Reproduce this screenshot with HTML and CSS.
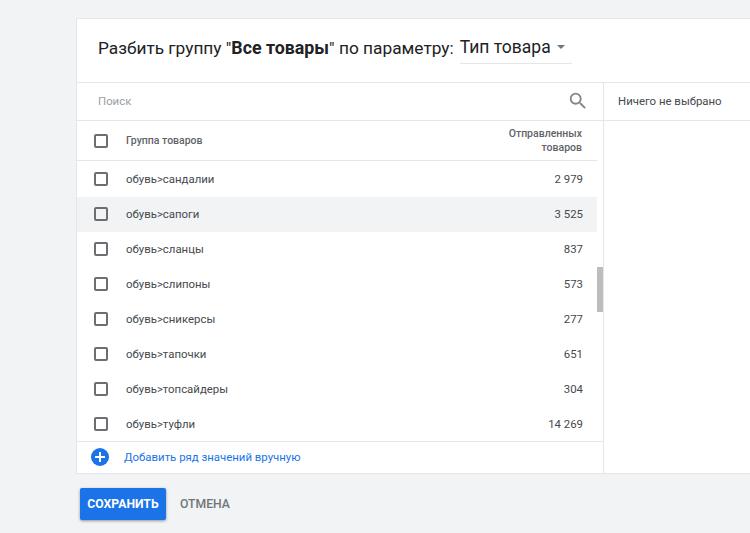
FILE: index.html
```html
<!DOCTYPE html>
<html>

<head lang="en">
    <meta charset="UTF-8">
    <title>Разбить группу</title>
    <link rel="stylesheet" href="styles.css">
</head>

<body>
    <div class="card">
        <div class="title">
            <span>Разбить группу "<b>Все товары</b>" по параметру:</span>
            <div class="select">
                <span>Тип товара</span>
                <i class="caret"></i>
            </div>
        </div>
        <div class="panes">
            <div class="left">
                <div class="search">
                    <span>Поиск</span>
                    <svg class="search-icon" width="22" height="22" viewBox="0 0 24 24">
                        <path fill="#80868b" d="M15.5 14h-.79l-.28-.27A6.47 6.47 0 0 0 16 9.5 6.5 6.5 0 1 0 9.5 16c1.61 0 3.09-.59 4.23-1.57l.27.28v.79l5 4.99L20.49 19l-4.99-5zm-6 0C7.01 14 5 11.99 5 9.5S7.01 5 9.5 5 14 7.01 14 9.5 11.99 14 9.5 14z"/>
                    </svg>
                </div>
                <div class="table-wrap">
                    <div class="table">
                        <div class="row head">
                            <i class="check"></i>
                            <span class="name">Группа товаров</span>
                            <span class="num">Отправленных<br>товаров</span>
                        </div>
                        <div class="row"><i class="check"></i><span class="name">обувь&gt;сандалии</span><span class="num">2 979</span></div>
                        <div class="row hover"><i class="check"></i><span class="name">обувь&gt;сапоги</span><span class="num">3 525</span></div>
                        <div class="row"><i class="check"></i><span class="name">обувь&gt;сланцы</span><span class="num">837</span></div>
                        <div class="row"><i class="check"></i><span class="name">обувь&gt;слипоны</span><span class="num">573</span></div>
                        <div class="row"><i class="check"></i><span class="name">обувь&gt;сникерсы</span><span class="num">277</span></div>
                        <div class="row"><i class="check"></i><span class="name">обувь&gt;тапочки</span><span class="num">651</span></div>
                        <div class="row"><i class="check"></i><span class="name">обувь&gt;топсайдеры</span><span class="num">304</span></div>
                        <div class="row"><i class="check"></i><span class="name">обувь&gt;туфли</span><span class="num">14 269</span></div>
                    </div>
                    <div class="scrollbar"><div class="thumb"></div></div>
                </div>
                <div class="add">
                    <svg width="18" height="18" viewBox="0 0 18 18">
                        <circle cx="9" cy="9" r="9" fill="#1a73e8"/>
                        <path fill="#fff" d="M8 4h2v4h4v2h-4v4H8v-4H4V8h4z"/>
                    </svg>
                    <span>Добавить ряд значений вручную</span>
                </div>
            </div>
            <div class="right">
                <div class="selected">Ничего не выбрано</div>
            </div>
        </div>
    </div>
    <div class="actions">
        <button type="button" class="save">СОХРАНИТЬ</button>
        <button type="button" class="cancel">ОТМЕНА</button>
    </div>
</body>

</html>
```

FILE: styles.css
```css
* {
    margin: 0;
    padding: 0;
    box-sizing: border-box;
}

body {
    height: 533px;
    overflow: hidden;
    padding: 18px 0 0 76px;
    background-color: #f1f3f4;
    font-family: Roboto, "Noto Sans", sans-serif;
    color: #45494d;
}

.card {
    width: 674px;
    height: 456px;
    border: 1px solid #e4e6e8;
    border-right: 0;
    background-color: #fff;
    display: flex;
    flex-direction: column;
}

.title {
    height: 64px;
    flex: none;
    padding: 0 0 6px 21px;
    display: flex;
    align-items: center;
    gap: 6px;
    font-size: 17.3px;
    color: #202124;
    border-bottom: 1px solid #e4e6e8;
}

.title b {
    font-size: 17.8px;
    font-weight: 700;
}

.select {
    height: 33px;
    width: 112px;
    display: flex;
    align-items: center;
    gap: 6px;
    font-size: 17.5px;
    border-bottom: 1px solid #e4e6e8;
}

.caret {
    width: 0;
    height: 0;
    border-left: 4.5px solid transparent;
    border-right: 4.5px solid transparent;
    border-top: 4.5px solid #757575;
}

.panes {
    flex: 1;
    display: flex;
    min-height: 0;
}

.left {
    width: 527px;
    display: flex;
    flex-direction: column;
    border-right: 1px solid #e4e6e8;
}

.search {
    height: 38px;
    flex: none;
    padding: 0 14px 1px 21px;
    display: flex;
    align-items: center;
    justify-content: space-between;
    font-size: 11.4px;
    color: #9aa0a6;
    border-bottom: 1px solid #e4e6e8;
}

.table-wrap {
    flex: 1;
    display: flex;
    min-height: 0;
    overflow: hidden;
}

.table {
    width: 520px;
}

.scrollbar {
    width: 6px;
    padding-top: 146px;
}

.thumb {
    height: 45px;
    background-color: #bdbdbd;
}

.row {
    height: 34.9px;
    padding: 0 14px 0 17px;
    display: flex;
    align-items: center;
    font-size: 11.4px;
}

.row.hover {
    background-color: #f1f3f4;
}

.row.head {
    height: 40px;
    margin-bottom: 1px;
    padding-right: 15px;
    border-bottom: 1px solid #e4e6e8;
    font-size: 10.5px;
    font-weight: 500;
    color: #5f6368;
    line-height: 14px;
}

.check {
    width: 14px;
    height: 14px;
    flex: none;
    border: 2px solid #6b6e72;
    border-radius: 2px;
}

.name {
    flex: 1;
    margin-left: 18px;
}

.num {
    text-align: right;
}

.add {
    height: 32px;
    flex: none;
    padding: 0 0 1px 14px;
    display: flex;
    align-items: center;
    gap: 15px;
    font-size: 11.4px;
    color: #1a73e8;
    border-top: 1px solid #e4e6e8;
}

.right {
    flex: 1;
}

.selected {
    height: 38px;
    padding: 0 0 1px 14px;
    display: flex;
    align-items: center;
    font-size: 11.4px;
    border-bottom: 1px solid #e4e6e8;
}

.actions {
    padding: 14px 0 0 4px;
    display: flex;
    align-items: center;
    gap: 8px;
}

button {
    height: 32px;
    border: 0;
    border-radius: 2px;
    padding: 0 6px;
    background: none;
    font-family: inherit;
    font-size: 12.2px;
    font-weight: 500;
    cursor: pointer;
}

.save {
    width: 86px;
    color: #fff;
    font-weight: 700;
    background-color: #1a73e8;
    box-shadow: 0 1px 3px rgba(0, 0, 0, 0.4);
}

.cancel {
    color: #70757a;
}
```
